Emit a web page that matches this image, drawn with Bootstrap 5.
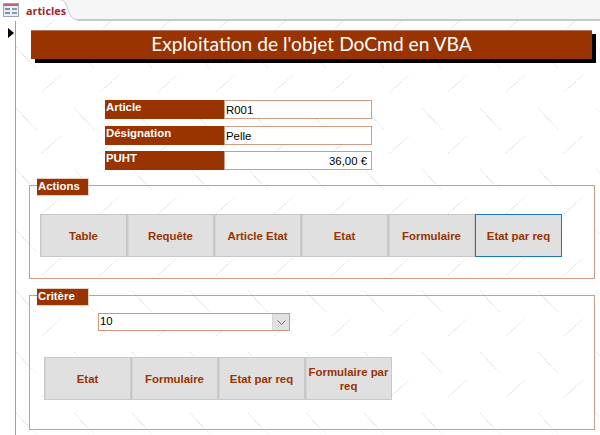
<!DOCTYPE html><html lang="fr">
<head>
  <meta charset="UTF-8">
  <meta name="viewport" content="width=device-width, initial-scale=1.0">
  <title>articles</title>
  <link href="https://cdn.jsdelivr.net/npm/bootstrap@5.3.0/dist/css/bootstrap.min.css" rel="stylesheet">
  <style>
    body { background-color: #fff; font-family: "Liberation Sans", Arial, sans-serif; overflow: hidden; height: 435px; }
    .tab-strip { height: 21px; background-color: #f5f5f5; border-bottom: 2px solid #c8c8c8; position: relative; }
    .tab-shape { position: absolute; left: 0; top: 0; }
    .tab-icon { position: absolute; left: 3px; top: 3px; }
    .tab-name { position: absolute; left: 26px; top: 1px; font: 700 10.8px/19px "Open Sans", sans-serif; color: #a4262c; }
    .selector-col { width: 16px; height: 414px; border-right: 1px solid #a0a0a0; flex: none; padding: 7px 0 0 8px; }
    .form-area {
      flex: 1; height: 414px; padding-top: 9px;
      background-image: url("data:image/svg+xml,%3Csvg xmlns='http://www.w3.org/2000/svg' width='58' height='61'%3E%3Cg fill='none' stroke='%23cfcfcf'%3E%3Cpath d='M6 7L26 28' stroke-dasharray='1 1.5'/%3E%3Cpath d='M32 52L51 35' stroke-dasharray='1 1.5'/%3E%3Cpath d='M12 14L19 21M37 48L43 42' stroke='%23e6e6e6'/%3E%3C/g%3E%3C/svg%3E");
      background-position: -6px 19px;
    }
    .title-bar {
      margin-left: 15px; width: 561px; height: 29px; background-color: #993300; color: #fff;
      box-shadow: 4px 4px 0 #000; border-top: 1px solid #b5765a;
      font: 400 19.2px/25px Lato, sans-serif; text-align: center;
    }
    .field-rows { margin: 41px 0 0 89px; width: 267px; }
    .field-row { height: 19px; margin-bottom: 7px; }
    .field-row.last-row { margin-top: -1px; margin-bottom: 0; }
    .field-label { width: 119px; flex: none; background-color: #993300; color: #fff; font-weight: 700; font-size: 11.4px; line-height: 15px; padding-left: 1px; }
    .field-input.form-control { height: 19px; min-height: 0; padding: 0 0 0 1px; border: 1px solid #cf9b85; font-size: 11.4px; line-height: 15px; color: #000; background: #fff; }
    .frame-box { position: relative; margin-left: 13px; width: 566px; border: 1px solid #cf9b85; }
    .frame-actions { margin-top: 15px; height: 94px; padding: 28px 0 0 10px; }
    .frame-critere { margin-top: 16px; height: 135px; padding: 17px 0 0 14px; }
    .frame-tag { position: absolute; left: 7px; top: -8px; width: 52px; height: 18px; background-color: #993300; color: #fff; font-weight: 700; font-size: 11.4px; line-height: 15px; padding-left: 1px; border: 1px solid #e8cfc4; border-width: 1px 1px 1px 0; }
    .combo-box { margin-left: 54px; width: 192px; height: 18px; border: 1px solid #d0957a; background: #fff; font-size: 11.4px; line-height: 15px; color: #000; padding-left: 1px; }
    .combo-arrow { width: 17px; height: 16px; background-color: #e1e1e1; border-left: 1px solid #d6d6d6; }
    .btn.cmd-btn {
      width: 87px; height: 43px; padding: 0 1px; border: 1px solid #c8c8c8; border-radius: 0; background-color: #e0e0e0;
      color: #993300; font-weight: 700; font-size: 11.4px; line-height: 14px; box-shadow: inset 1px 0 0 #d4d4d4;
    }
    .btn.cmd-focus { border: 1px solid #1d76bb; box-shadow: none; }
    .cmd-row-2 { margin-top: 26px; }
  </style>
</head>
<body>
  <div class="tab-strip">
    <svg class="tab-shape" width="80" height="21" viewBox="0 0 80 21"><path d="M0 0H61C65 0 66 4 68 10C70 16 72 19 78 20V21H0Z" fill="#fff"/><path d="M61 0C65 0 66 4 68 10C70 16 72 19 78 20" fill="none" stroke="#c8c8c8"/></svg>
    <svg class="tab-icon" width="16" height="14" viewBox="0 0 16 14">
      <rect x="0.5" y="0.5" width="15" height="13" fill="#e8eef6" stroke="#9aa5b5"/>
      <rect x="1" y="1" width="14" height="2" fill="#c0607a"/>
      <rect x="2" y="5" width="5" height="2" fill="#7d8ea6"/>
      <rect x="9" y="5" width="5" height="2" fill="#8a9ab0"/>
      <rect x="2" y="9" width="5" height="2" fill="#7d8ea6"/>
      <rect x="9" y="9" width="5" height="2" fill="#8a9ab0"/>
    </svg>
    <span class="tab-name">articles</span>
  </div>
  <div class="d-flex">
    <div class="selector-col">
      <svg class="d-block" width="6" height="10" viewBox="0 0 6 10"><path d="M0 0L6 5L0 10Z" fill="#000"/></svg>
    </div>
    <div class="form-area">
      <div class="title-bar">Exploitation de l'objet DoCmd en VBA</div>

      <div class="field-rows">
        <div class="field-row d-flex">
          <div class="field-label">Article</div>
          <input class="field-input form-control rounded-0" type="text" value="R001">
        </div>
        <div class="field-row d-flex">
          <div class="field-label">Désignation</div>
          <input class="field-input form-control rounded-0" type="text" value="Pelle">
        </div>
        <div class="field-row last-row d-flex">
          <div class="field-label">PUHT</div>
          <input class="field-input form-control rounded-0 text-end pe-1" type="text" value="36,00 €">
        </div>
      </div>

      <div class="frame-box frame-actions">
        <div class="frame-tag">Actions</div>
        <div class="d-flex">
          <button class="btn cmd-btn" type="button">Table</button>
          <button class="btn cmd-btn" type="button">Requête</button>
          <button class="btn cmd-btn" type="button">Article Etat</button>
          <button class="btn cmd-btn" type="button">Etat</button>
          <button class="btn cmd-btn" type="button">Formulaire</button>
          <button class="btn cmd-btn cmd-focus" type="button">Etat par req</button>
        </div>
      </div>

      <div class="frame-box frame-critere">
        <div class="frame-tag">Critère</div>
        <div class="combo-box d-flex justify-content-between">
          <span>10</span>
          <div class="combo-arrow d-flex align-items-center justify-content-center">
            <svg width="9" height="5" viewBox="0 0 9 5"><path d="M0.5 0.5L4.5 4.5L8.5 0.5" fill="none" stroke="#707070"/></svg>
          </div>
        </div>
        <div class="d-flex cmd-row-2">
          <button class="btn cmd-btn" type="button">Etat</button>
          <button class="btn cmd-btn" type="button">Formulaire</button>
          <button class="btn cmd-btn" type="button">Etat par req</button>
          <button class="btn cmd-btn" type="button">Formulaire par req</button>
        </div>
      </div>
    </div>
  </div>
  <script src="https://cdn.jsdelivr.net/npm/bootstrap@5.3.0/dist/js/bootstrap.bundle.min.js"></script>
</body>
</html>
